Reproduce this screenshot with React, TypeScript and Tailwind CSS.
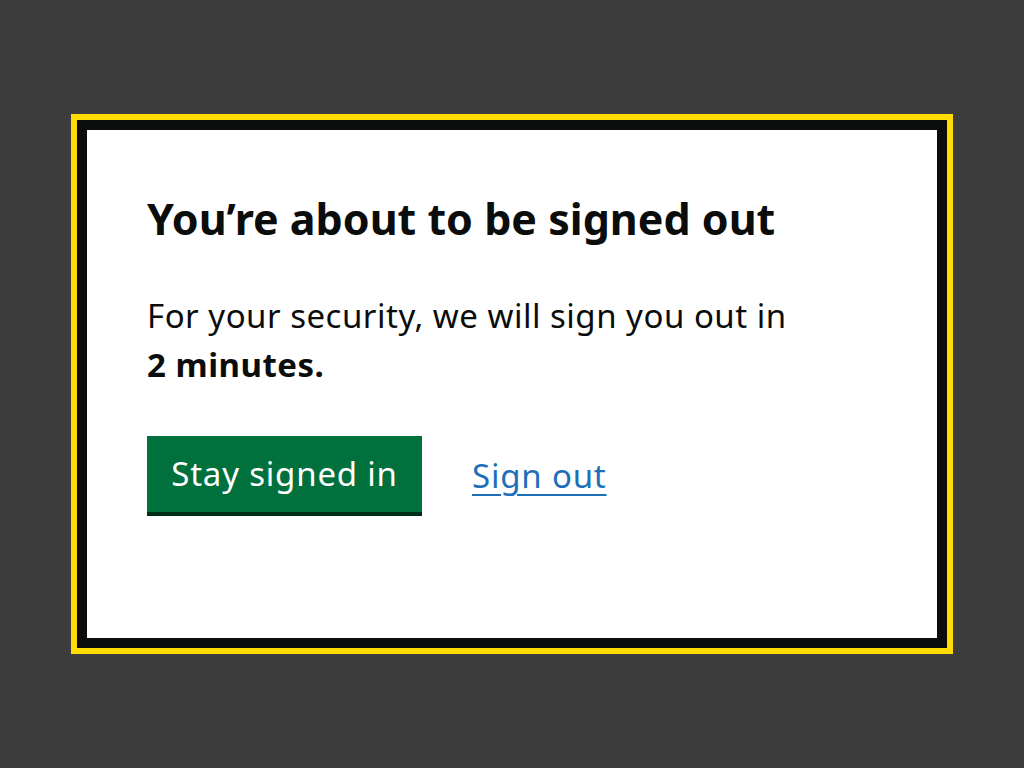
export default function App() {
  return (
    <div className="flex h-[768px] w-full items-center justify-center bg-[#3b3c3b] font-['Noto_Sans',sans-serif] text-[#0b0c0c]">
      <div className="h-[540px] w-[882px] border-[6px] border-[#ffdd00]">
        <div className="h-full w-full border-[10px] border-[#0b0c0c] bg-white px-[60px] pt-[64px]">
          <h1 className="text-[43px] font-bold leading-[50px]">You’re about to be signed out</h1>
          <p className="mt-[47px] text-[33px] leading-[49px] tracking-[0.5px]">
            For your security, we will sign you out in
            <br />
            <strong className="font-bold">2 minutes.</strong>
          </p>
          <div className="mt-[47px] flex items-center gap-[50px]">
            <button className="h-[80px] w-[275px] border-b-4 border-[#002d18] bg-[#00703c] text-[33px] tracking-[0.8px] text-white">
              Stay signed in
            </button>
            <a href="#" className="text-[33px] tracking-[0.8px] text-[#1d70b8] underline decoration-2 underline-offset-[6px]">
              Sign out
            </a>
          </div>
        </div>
      </div>
    </div>
  );
}
